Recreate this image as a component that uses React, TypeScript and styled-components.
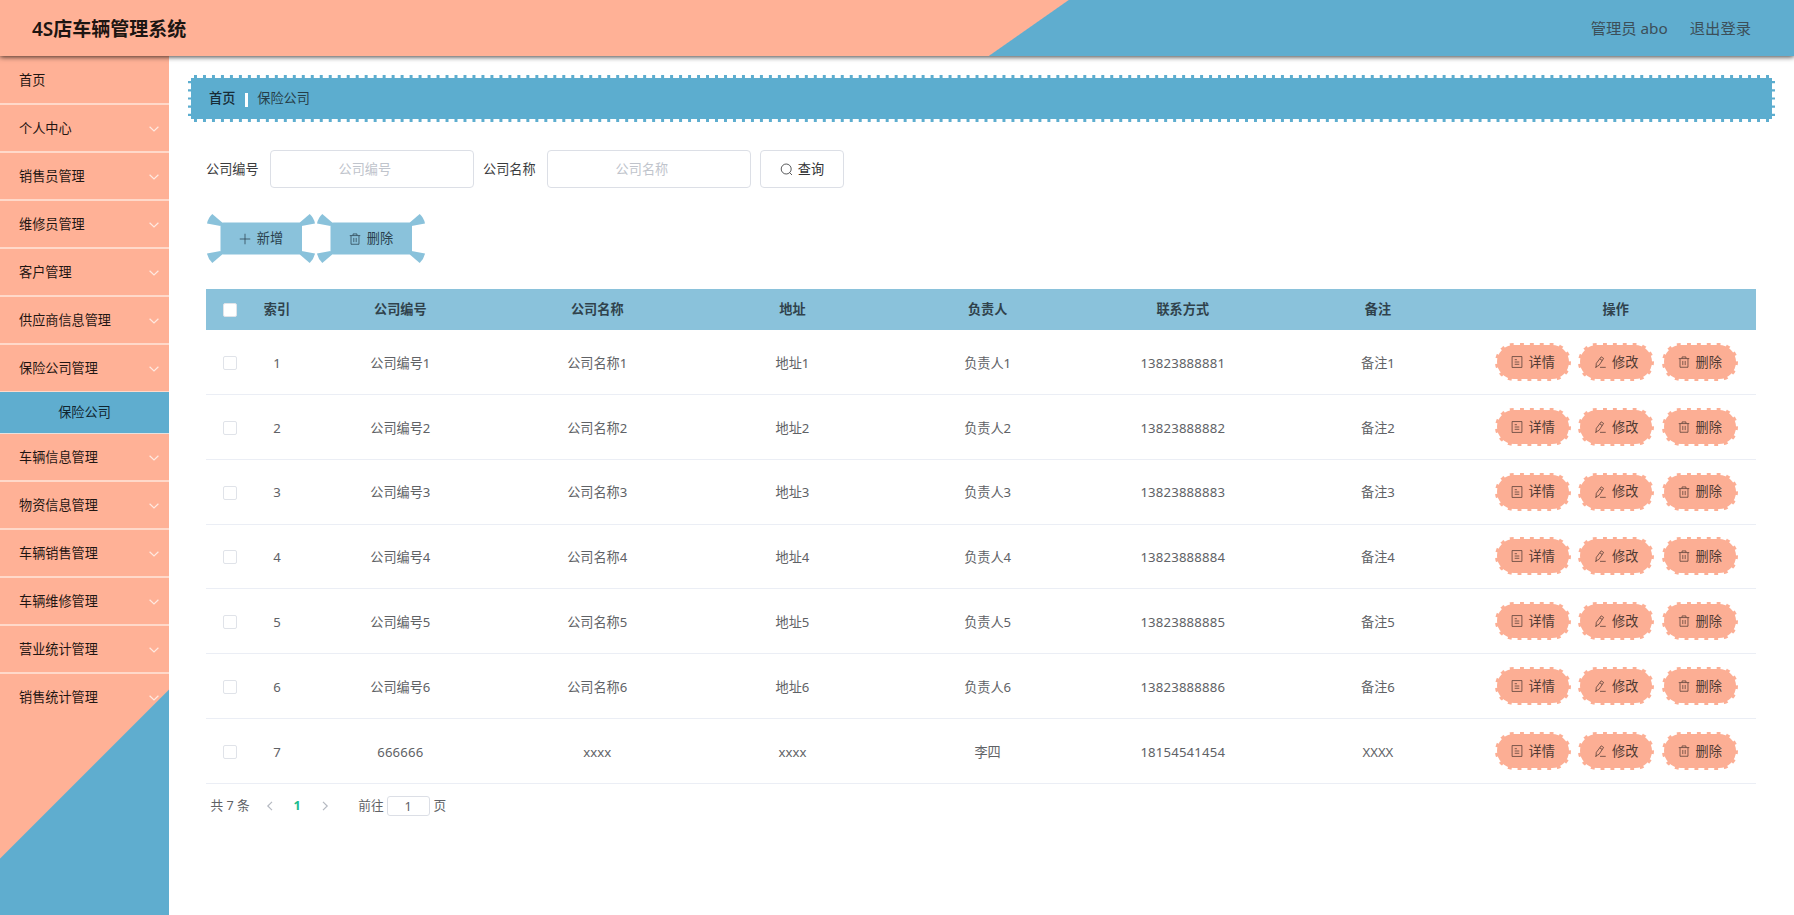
import React from "react";
import styled, { createGlobalStyle, css } from "styled-components";

const salmon = "#ffb196";
const blue = "#5fadcf";
const paleBlue = "#8ac2db";

const GlobalStyle = createGlobalStyle`
  * { box-sizing: border-box; }
  body {
    margin: 0;
    background: #fff;
    color: #303133;
    font-family: "Noto Sans", "Noto Sans CJK SC", sans-serif;
    font-size: 13.15px;
    line-height: 1.4;
  }
  button, input { font: inherit; color: inherit; }
`;

const Page = styled.div`
  display: flex;
  flex-direction: column;
  height: 100vh;
  overflow: hidden;
`;

const Header = styled.header`
  position: relative;
  z-index: 1;
  display: flex;
  flex: none;
  align-items: center;
  justify-content: space-between;
  height: 56px;
  padding: 2px 43px 0 32px;
  background: linear-gradient(145deg, ${salmon} 612.5px, ${blue} 613.5px);
  box-shadow: 0 1px 5px rgba(0, 0, 0, 0.75);
`;

const Title = styled.h1`
  margin: 0;
  color: #1c1512;
  font-size: 19px;
  font-weight: 600;
`;

const UserArea = styled.div`
  display: flex;
  gap: 22px;
  color: #3c4f59;
  font-size: 15.3px;
`;

const Body = styled.div`
  display: flex;
  flex: 1;
  min-height: 0;
`;

const Sidebar = styled.nav`
  flex: none;
  width: 169px;
  background: linear-gradient(135deg, ${salmon} 567px, ${blue} 568px);
`;

const MenuItem = styled.div`
  display: flex;
  align-items: center;
  justify-content: space-between;
  height: 48px;
  padding: 1px 9px 0 19px;
  border-bottom: 2px solid #ffd9ca;
  color: #1f1613;
  line-height: 1;

  &:first-child {
    height: 49px;
    padding-top: 3px;
  }
  &:last-child {
    padding-bottom: 2px;
    border-bottom: 0;
  }
`;

const SubItem = styled.div`
  display: flex;
  align-items: center;
  justify-content: center;
  height: 42px;
  margin-top: -1px;
  border-bottom: 1px solid #e8e1de;
  background: ${blue};
  color: #10252f;
`;

const Main = styled.main`
  flex: 1;
  padding: 19px 19px 0 19px;
`;

const Breadcrumb = styled.div`
  display: flex;
  align-items: center;
  gap: 9.5px;
  height: 47px;
  padding: 0 18px;
  border: 3px dashed #fff;
  background: #5cadcf;
  color: #263e49;
`;

const CrumbHome = styled.span`
  color: #172c36;
  font-weight: 500;
`;

const CrumbDivider = styled.i`
  width: 3px;
  height: 14px;
  margin-top: 3px;
  background: #fff;
`;

const Content = styled.div`
  padding: 28px 19px 0 18px;
`;

const SearchForm = styled.div`
  display: flex;
  align-items: center;
  height: 38px;
`;

const Field = styled.label`
  display: flex;
  align-items: center;
  gap: 11.5px;
  margin-right: 9.5px;
  color: #3a3b3d;
`;

const FieldInput = styled.input`
  width: 203.5px;
  height: 38px;
  padding: 0 28px 1px 14px;
  border: 1px solid #dcdfe6;
  border-radius: 4px;
  background: #fff;
  text-align: center;
  outline: none;

  &::placeholder { color: #c0c4cc; }
`;

const SearchButton = styled.button`
  display: flex;
  align-items: center;
  justify-content: center;
  gap: 5px;
  width: 83.5px;
  height: 38px;
  padding: 0;
  border: 1px solid #dcdfe6;
  border-radius: 4px;
  background: #fff;
`;

const Toolbar = styled.div`
  display: flex;
  gap: 2px;
  margin-top: 26px;
  padding-left: 1px;
`;

const RibbonButton = styled.button`
  position: relative;
  display: flex;
  align-items: center;
  justify-content: center;
  gap: 6px;
  width: 108px;
  height: 49px;
  padding: 0;
  border: 0;
  background: none;
  color: #29404c;
  line-height: 1;
`;

const RibbonShape = styled.svg`
  position: absolute;
  inset: 0;
  z-index: -1;
  fill: ${paleBlue};
`;

const Table = styled.div`
  display: flex;
  flex-direction: column;
  margin-top: 26px;
`;

const columns = css`
  display: grid;
  grid-template-columns: 47px 48px 198.6px 195.3px 195.2px 195.1px 195.2px 195.1px 1fr;
  align-items: center;
  justify-items: center;
`;

const HeadRow = styled.div`
  ${columns}
  height: 41px;
  background: ${paleBlue};
  color: #30424c;
  font-weight: 600;
`;

const Row = styled.div`
  ${columns}
  height: 64.85px;
  padding-top: 2px;
  border-bottom: 1px solid #ebeef5;
  color: #606266;
`;

const Cell = styled.span<{ $numeric?: boolean }>`
  letter-spacing: ${(p) => (p.$numeric ? "0.18px" : "normal")};
`;

const Checkbox = styled.span`
  width: 14px;
  height: 14px;
  border: 1px solid #e0e3e9;
  border-radius: 2px;
  background: #fff;
`;

const Actions = styled.div`
  display: flex;
  gap: 7.5px;
  padding: 0 0 2px 1px;
`;

const ActionButton = styled.button`
  display: flex;
  align-items: center;
  justify-content: center;
  gap: 6px;
  width: 76px;
  height: 38px;
  padding: 0;
  border: 2px dashed #fff;
  border-radius: 20px;
  background: #fcae94;
  color: #503a33;
`;

const Pagination = styled.div`
  display: flex;
  align-items: center;
  height: 20px;
  margin-top: 12px;
  padding-left: 4.5px;
  color: #606266;
  font-size: 12.7px;
`;

const PageArrow = styled.span`
  display: flex;
  margin: 0 14px;
`;

const CurrentPage = styled.span`
  width: 15px;
  color: #1dbb8c;
  font-weight: 700;
  text-align: center;
`;

const JumpInput = styled.input`
  width: 43px;
  height: 20px;
  margin: 0 4px 0 3px;
  padding: 0;
  border: 1px solid #dcdfe6;
  border-radius: 3px;
  text-align: center;
`;

const JumpLabel = styled.span`
  margin-left: 13.5px;
`;

const Glyph = styled.svg`
  flex: none;
  fill: none;
  stroke: currentColor;
  stroke-width: 0.8;
`;

type IconName = "plus" | "trash" | "search" | "doc" | "edit";

const iconPaths: Record<IconName, React.ReactNode> = {
  plus: <path d="M6.5 .8v11.4M.8 6.5h11.4" />,
  trash: <path d="M.8 2.8h11.4M4.4 2.6V1h4.2v1.6M2.2 3v9.2h8.6V3M5.2 5.3v4.6M7.8 5.3v4.6" />,
  search: (
    <>
      <circle cx="6.2" cy="6" r="5" />
      <path d="M9.7 9.7l2.3 2.3" />
    </>
  ),
  doc: <path d="M1.2 .6h10.6v11.8H1.2zM4 4h2.4M4 6.5h5M4 9h5" />,
  edit: <path d="M7.8 .9l2.6 1.7-4.9 7.5-3.3 1.7.3-3.8zM6.3 3.1l2.7 1.8M6.5 12.3h6.2M1.2 12.3h1.5" />,
};

const Icon = ({ name, size = 13 }: { name: IconName; size?: number }) => (
  <Glyph width={size} height={size} viewBox="0 0 13 13">{iconPaths[name]}</Glyph>
);

const Chevron = styled(Glyph)`
  color: #ffe9e1;
  stroke-width: 1.2;
`;

const Arrow = styled(Glyph)`
  color: #b5b9c1;
  stroke-width: 1.2;
`;

const Wedge = "M5.3 0L15.5 8.7 13.5 12 0 9.4Q1.2 3.8 5.3 0Z";

const Ribbon = ({ icon, children }: { icon: IconName; children: React.ReactNode }) => (
  <RibbonButton>
    <RibbonShape width="108" height="49" viewBox="0 0 108 49">
      <rect x="13.5" y="8.5" width="81.5" height="32" rx="3" />
      <path d={Wedge} />
      <path d={Wedge} transform="translate(108 0) scale(-1 1)" />
      <path d={Wedge} transform="translate(0 49) scale(1 -1)" />
      <path d={Wedge} transform="translate(108 49) scale(-1 -1)" />
    </RibbonShape>
    <Icon name={icon} size={12} />
    {children}
  </RibbonButton>
);

const menu = [
  "首页", "个人中心", "销售员管理", "维修员管理", "客户管理", "供应商信息管理", "保险公司管理",
  "车辆信息管理", "物资信息管理", "车辆销售管理", "车辆维修管理", "营业统计管理", "销售统计管理",
];

const headings = ["索引", "公司编号", "公司名称", "地址", "负责人", "联系方式", "备注", "操作"];

const rows = [
  ...[1, 2, 3, 4, 5, 6].map((n) => [
    `${n}`, `公司编号${n}`, `公司名称${n}`, `地址${n}`, `负责人${n}`, `1382388888${n}`, `备注${n}`,
  ]),
  ["7", "666666", "xxxx", "xxxx", "李四", "18154541454", "XXXX"],
];

export default function App() {
  return (
    <Page>
      <GlobalStyle />
      <Header>
        <Title>4S店车辆管理系统</Title>
        <UserArea>
          <span>管理员 abo</span>
          <span>退出登录</span>
        </UserArea>
      </Header>
      <Body>
        <Sidebar>
          {menu.map((label, i) => (
            <React.Fragment key={label}>
              <MenuItem>
                {label}
                {i > 0 && (
                  <Chevron width="12" height="12" viewBox="0 0 12 12">
                    <path d="M1.6 3.8L6 8l4.4-4.2" />
                  </Chevron>
                )}
              </MenuItem>
              {label === "保险公司管理" && <SubItem>保险公司</SubItem>}
            </React.Fragment>
          ))}
        </Sidebar>
        <Main>
          <Breadcrumb>
            <CrumbHome>首页</CrumbHome>
            <CrumbDivider />
            <span>保险公司</span>
          </Breadcrumb>
          <Content>
            <SearchForm>
              <Field>公司编号<FieldInput placeholder="公司编号" /></Field>
              <Field>公司名称<FieldInput placeholder="公司名称" /></Field>
              <SearchButton><Icon name="search" />查询</SearchButton>
            </SearchForm>
            <Toolbar>
              <Ribbon icon="plus">新增</Ribbon>
              <Ribbon icon="trash">删除</Ribbon>
            </Toolbar>
            <Table>
              <HeadRow>
                <Checkbox />
                {headings.map((h) => <span key={h}>{h}</span>)}
              </HeadRow>
              {rows.map((row) => (
                <Row key={row[0]}>
                  <Checkbox />
                  {row.map((value, i) => (
                    <Cell key={i} $numeric={/^\d+$/.test(value)}>{value}</Cell>
                  ))}
                  <Actions>
                    <ActionButton><Icon name="doc" size={12} />详情</ActionButton>
                    <ActionButton><Icon name="edit" size={12} />修改</ActionButton>
                    <ActionButton><Icon name="trash" size={12} />删除</ActionButton>
                  </Actions>
                </Row>
              ))}
            </Table>
            <Pagination>
              <span>共 7 条</span>
              <PageArrow>
                <Arrow width="12" height="12" viewBox="0 0 12 12"><path d="M8 1.8L3.8 6 8 10.2" /></Arrow>
              </PageArrow>
              <CurrentPage>1</CurrentPage>
              <PageArrow>
                <Arrow width="12" height="12" viewBox="0 0 12 12"><path d="M4 1.8L8.2 6 4 10.2" /></Arrow>
              </PageArrow>
              <JumpLabel>前往</JumpLabel>
              <JumpInput defaultValue="1" />
              <span>页</span>
            </Pagination>
          </Content>
        </Main>
      </Body>
    </Page>
  );
}
